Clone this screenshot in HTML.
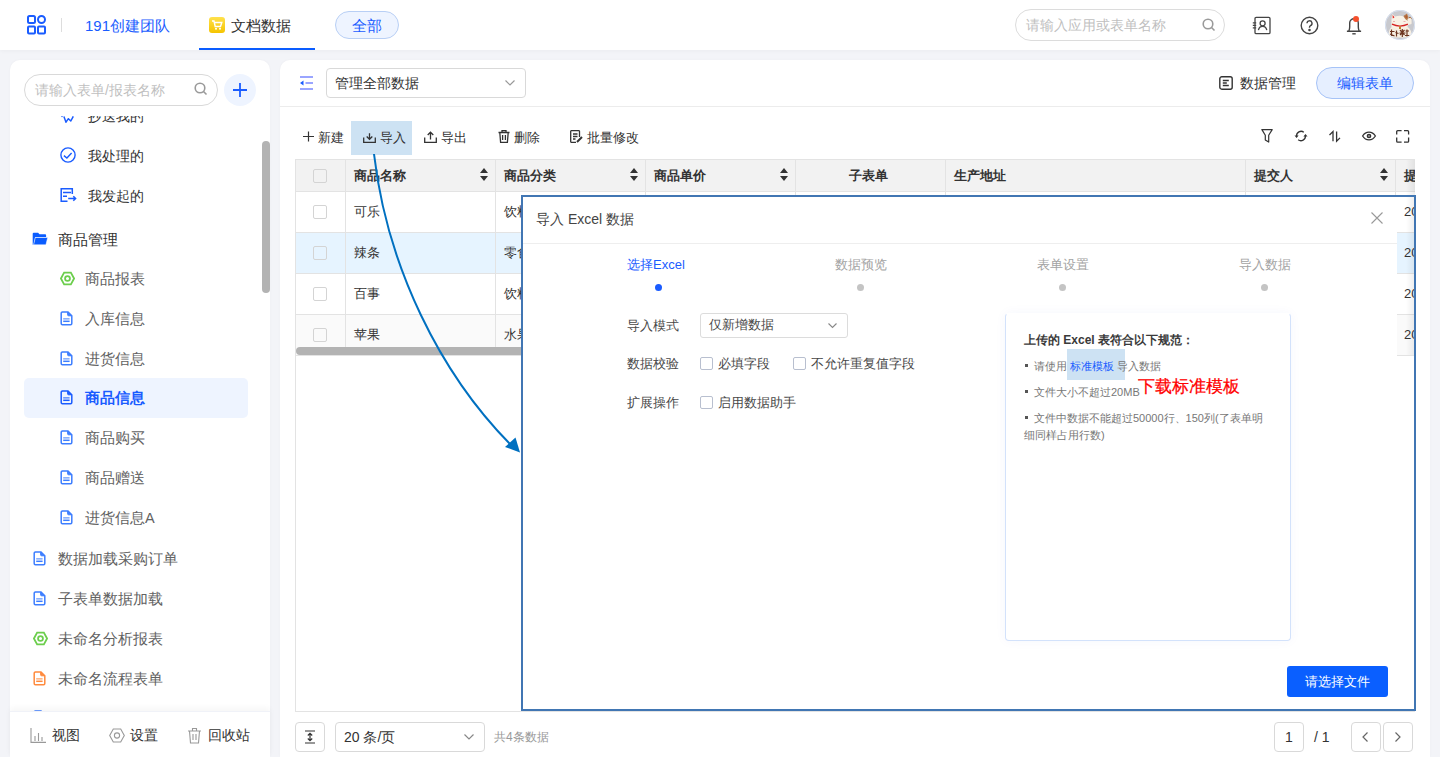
<!DOCTYPE html>
<html><head><meta charset="utf-8">
<style>
*{box-sizing:border-box;margin:0;padding:0}
html,body{width:1440px;height:757px;overflow:hidden}
body{background:#f3f4f8;font-family:"Liberation Sans",sans-serif;font-size:14px;color:#333;position:relative}
.a{position:absolute}
.t{position:absolute;white-space:nowrap;line-height:20px}
svg{position:absolute;overflow:visible}
#hdr{left:0;top:0;width:1440px;height:50px;background:#fff;box-shadow:0 1px 4px rgba(0,0,0,.04)}
#side{left:10px;top:60px;width:260px;height:697px;background:#fff;border-radius:10px 10px 0 0;box-shadow:0 0 3px rgba(0,0,0,.03)}
#main{left:280px;top:60px;width:1150px;height:697px;background:#fff;border-radius:10px 10px 0 0;box-shadow:0 0 3px rgba(0,0,0,.03)}
.it{color:#626262;font-size:14.5px}
.th{font-weight:bold;color:#333;font-size:13px}
.cb{position:absolute;width:14px;height:14px;border:1px solid #d4d4d4;border-radius:2px}
.vl{position:absolute;width:1px;background:#e3e3e3}
.hl{position:absolute;height:1px;background:#e3e3e3}
</style></head><body>

<!-- HEADER -->
<div id="hdr" class="a">
  <svg style="left:27px;top:15px" width="20" height="20" viewBox="0 0 20 20" fill="none" stroke="#1a5cff" stroke-width="2">
    <rect x="1" y="1" width="7" height="7" rx="1.5"/><circle cx="14.5" cy="4.5" r="3.5"/>
    <rect x="1" y="11.5" width="7" height="7" rx="1"/><rect x="11" y="11.5" width="7" height="7" rx="1"/>
  </svg>
  <div class="a" style="left:61px;top:18px;width:1px;height:14px;background:#ddd"></div>
  <div class="t" style="left:85px;top:16px;font-size:15px;color:#1a5cff">191创建团队</div>
  <div class="a" style="left:209px;top:17px;width:16px;height:16px;border-radius:3px;background:linear-gradient(#ffe14d,#f5c400)"></div>
  <svg style="left:211px;top:19px" width="12" height="12" viewBox="0 0 12 12"><path d="M1 2h2l1.2 5.5h5.3L10.8 3.5H4" fill="none" stroke="#fff" stroke-width="1.4"/><circle cx="5" cy="9.8" r="1" fill="#fff"/><circle cx="9" cy="9.8" r="1" fill="#fff"/></svg>
  <div class="t" style="left:231px;top:16px;font-size:15px;color:#333">文档数据</div>
  <div class="a" style="left:199px;top:48px;width:116px;height:2px;background:#0a5cff"></div>
  <div class="a" style="left:335px;top:11px;width:64px;height:28px;border-radius:14px;background:#eef4ff;border:1px solid #b8cff5"></div>
  <div class="t" style="left:352px;top:16px;font-size:15px;color:#1a5cff">全部</div>

  <div class="a" style="left:1015px;top:9px;width:210px;height:32px;border-radius:16px;border:1px solid #dcdcdc"></div>
  <div class="t" style="left:1026px;top:15px;font-size:14px;color:#bfbfbf">请输入应用或表单名称</div>
  <svg style="left:1202px;top:18px" width="14" height="14" viewBox="0 0 14 14" fill="none" stroke="#9a9a9a" stroke-width="1.6"><circle cx="6" cy="6" r="4.8"/><path d="M9.5 9.5L12.5 12.5"/></svg>

  <svg style="left:1252px;top:16px" width="19" height="19" viewBox="0 0 19 19" fill="none" stroke="#444" stroke-width="1.3">
    <rect x="3" y="1.4" width="15" height="16.2" rx="1.2"/><circle cx="10.6" cy="7.3" r="2.5"/><path d="M6.4 14.2c.5-2.7 2-3.9 4.2-3.9s3.7 1.2 4.2 3.9"/><path d="M.8 6.9h3.4M.8 9.4h3.4M.8 11.9h3.4"/>
  </svg>
  <svg style="left:1300px;top:16px" width="19" height="19" viewBox="0 0 19 19" fill="none" stroke="#444" stroke-width="1.4">
    <circle cx="9.5" cy="9.5" r="8.3"/><path d="M7 7.3a2.5 2.5 0 1 1 3.5 2.3c-.7.4-1 .8-1 1.6v.6"/><circle cx="9.5" cy="14" r=".6" fill="#444"/>
  </svg>
  <svg style="left:1346px;top:15px" width="16" height="20" viewBox="0 0 16 20" fill="none" stroke="#444" stroke-width="1.4">
    <path d="M.9 16.3h14.2M2.7 16.3c.7-1.2 1-2.6 1-4.2V8.1a4.3 4.3 0 0 1 8.6 0v4c0 1.6.3 3 1 4.2"/><path d="M6.3 18.8h3.4"/>
  </svg>
  <div class="a" style="left:1353px;top:16px;width:6px;height:6px;border-radius:50%;background:#f5502d"></div>
  <svg style="left:1385px;top:10px" width="30" height="30" viewBox="0 0 30 30">
    <defs><clipPath id="avc"><circle cx="15" cy="15" r="15"/></clipPath></defs>
    <circle cx="15" cy="15" r="15" fill="#c8c9ce"/>
    <g clip-path="url(#avc)">
      <path d="M3.5 27.5 Q3 20 7 16.5 L22 16.5 Q27 19 26.5 27.5z" fill="#f7efe2"/>
      <path d="M6.5 17 Q6 8 7.5 4 L10 6.5 Q15 5 19 6.5 L22 3.5 Q24 9 22.5 17 Q15 20 6.5 17z" fill="#f9f2e6"/>
      <path d="M7.6 5 L9.5 7.2 L7.8 8.5z" fill="#e52420"/>
      <path d="M21.8 4.5 L20 7 L22 8.5z" fill="#e52420"/>
      <path d="M18.5 6 L22 3.5 Q24 7 23.5 11 Q20 10 18.5 6z" fill="#a9642f" opacity=".85"/>
      <path d="M7 14.2 Q15 18 23 14.2" fill="none" stroke="#d62424" stroke-width="1.4"/>
      <rect x="14" y="16.5" width="2" height="2.5" fill="#b8832e"/>
      <path d="M22.5 9 L25.5 7.5 Q27 9 26.5 14 L23 15z" fill="#f7efe2"/>
      <path d="M24 7.6 Q25.5 7 26.5 8.5" stroke="#a9642f" stroke-width="1" fill="none"/>
      <path d="M5 21.5h4.5M6.5 19.5v6.5M5 24l4.5 2M10.5 22.5l3 1M11.5 20.5v6M15 20l4.5 5M19.5 20l-4.5 5M17.3 19v8M14.5 23h6M20.5 21h3.5M22 19.5v7M20 25.5h4.5" stroke="#6b3520" stroke-width="1.2" fill="none"/>
      <path d="M8 11.5h2M18.5 11.5h2" stroke="#e6a0a0" stroke-width=".8"/>
    </g>
    <circle cx="15" cy="15" r="14.6" fill="none" stroke="#dbe7fa" stroke-width=".8"/>
  </svg></div>

<!-- SIDEBAR -->
<div id="side" class="a"></div>
<svg width="0" height="0" style="position:absolute">
 <defs>
  <symbol id="doc" viewBox="0 0 13 15"><path d="M1.2 2.2a1.2 1.2 0 0 1 1.2-1.2h5.6l3.8 3.8v7.8a1.2 1.2 0 0 1-1.2 1.2H2.4a1.2 1.2 0 0 1-1.2-1.2z" fill="none" stroke="currentColor" stroke-width="1.5"/><path d="M7.6 1.2v2.6a1 1 0 0 0 1 1h2.6z" fill="currentColor" stroke="currentColor" stroke-width="1"/><path d="M3.2 7.9h6.4" stroke="currentColor" stroke-width="1"/><path d="M3.2 10.3h6.4" stroke="currentColor" stroke-width="1.5"/></symbol>
  <symbol id="hex" viewBox="0 0 16 15"><path d="M4.4 1.3h7.2L15 7.5l-3.4 6.2H4.4L1 7.5z" fill="none" stroke="currentColor" stroke-width="1.9"/><circle cx="8" cy="7.5" r="2.6" fill="none" stroke="currentColor" stroke-width="1.9"/></symbol>
 </defs>
</svg>
<div class="a" style="left:24px;top:74px;width:194px;height:32px;border-radius:16px;border:1px solid #d9d9d9;background:#fff"></div>
<div class="t" style="left:35px;top:80px;color:#bfbfbf">请输入表单/报表名称</div>
<svg style="left:194px;top:82px" width="14" height="14" viewBox="0 0 14 14" fill="none" stroke="#9a9a9a" stroke-width="1.6"><circle cx="6" cy="6" r="4.8"/><path d="M9.5 9.5L12.5 12.5"/></svg>
<div class="a" style="left:224px;top:74px;width:32px;height:32px;border-radius:50%;background:#eef4ff"></div>
<svg style="left:233px;top:83px" width="14" height="14" viewBox="0 0 14 14" stroke="#1a5cff" stroke-width="1.8"><path d="M7 0v14M0 7h14"/></svg>

<div id="slist" class="a" style="left:10px;top:116px;width:260px;height:595px;overflow:hidden">
  <!-- coords relative: page y - 116, page x - 10 -->
  <svg style="left:50px;top:-8px" width="16" height="16" viewBox="0 0 16 16" fill="none" stroke="#1a5cff" stroke-width="1.5" stroke-linejoin="round"><path d="M3.9 8.4L6 14.2L8.4 10.7L10.8 13L13.3 8.3"/><circle cx="2" cy="8.6" r=".7" fill="#1a5cff" stroke="none"/></svg>
  <div class="t" style="left:78px;top:-10px;color:#333">抄送我的</div>
  <svg style="left:50px;top:31px" width="16" height="16" viewBox="0 0 16 16" fill="none" stroke="#1a5cff" stroke-width="1.4"><circle cx="8" cy="8" r="7.1"/><path d="M3.9 8.6L6.9 11L11.6 6"/></svg>
  <div class="t" style="left:78px;top:30px;color:#333">我处理的</div>
  <svg style="left:50px;top:72px" width="17" height="16" viewBox="0 0 17 16" fill="none" stroke="#1a5cff" stroke-width="1.5"><path d="M12.3 6V.8H1.2V13.2H7.5"/><path d="M3 4.4H11M3 8.3H7"/><path d="M8.2 10.5H15.6M13.3 8.2L15.6 10.5L13.3 12.8"/></svg>
  <div class="t" style="left:78px;top:70px;color:#333">我发起的</div>
  <svg style="left:22px;top:116px" width="16" height="13" viewBox="0 0 16 13"><path d="M.7 1.7a1 1 0 0 1 1-1h4.4l1.4 1.6h5.6a1 1 0 0 1 1 1v1.6H3.2L1.6 12.8H.7z" fill="#0a5cff"/><path d="M3.3 5.5h12.4l-1.8 7.3H1.6z" fill="#0a5cff" stroke="#fff" stroke-width=".5"/></svg>
  <div class="t" style="left:48px;top:114px;color:#333;font-size:14.5px">商品管理</div>

  <svg style="left:50px;top:155px;color:#6cce4d" width="15" height="15"><use href="#hex"/></svg>
  <div class="t it" style="left:75px;top:153px">商品报表</div>
  <svg style="left:50px;top:195px;color:#3d7eff" width="13" height="15"><use href="#doc"/></svg>
  <div class="t it" style="left:75px;top:193px">入库信息</div>
  <svg style="left:50px;top:235px;color:#3d7eff" width="13" height="15"><use href="#doc"/></svg>
  <div class="t it" style="left:75px;top:233px">进货信息</div>
  <div class="a" style="left:14px;top:262px;width:224px;height:40px;border-radius:5px;background:#eef4ff"></div>
  <svg style="left:50px;top:274px;color:#1a5cff" width="13" height="15"><use href="#doc"/></svg>
  <div class="t" style="left:75px;top:272px;color:#1a5cff;font-weight:bold;font-size:14.5px">商品信息</div>
  <svg style="left:50px;top:314px;color:#3d7eff" width="13" height="15"><use href="#doc"/></svg>
  <div class="t it" style="left:75px;top:312px">商品购买</div>
  <svg style="left:50px;top:354px;color:#3d7eff" width="13" height="15"><use href="#doc"/></svg>
  <div class="t it" style="left:75px;top:352px">商品赠送</div>
  <svg style="left:50px;top:394px;color:#3d7eff" width="13" height="15"><use href="#doc"/></svg>
  <div class="t it" style="left:75px;top:392px">进货信息A</div>
  <svg style="left:23px;top:435px;color:#3d7eff" width="13" height="15"><use href="#doc"/></svg>
  <div class="t it" style="left:48px;top:433px">数据加载采购订单</div>
  <svg style="left:23px;top:475px;color:#3d7eff" width="13" height="15"><use href="#doc"/></svg>
  <div class="t it" style="left:48px;top:473px">子表单数据加载</div>
  <svg style="left:23px;top:515px;color:#6cce4d" width="15" height="15"><use href="#hex"/></svg>
  <div class="t it" style="left:48px;top:513px">未命名分析报表</div>
  <svg style="left:23px;top:555px;color:#ff8a3d" width="13" height="15"><use href="#doc"/></svg>
  <div class="t it" style="left:48px;top:553px">未命名流程表单</div>
  <svg style="left:23px;top:594px;color:#3d7eff" width="13" height="15"><use href="#doc"/></svg>
  <div class="a" style="left:252px;top:25px;width:8px;height:152px;border-radius:4px;background:#b3b3b3"></div>
</div>
<div class="a" style="left:10px;top:711px;width:260px;height:46px;background:#fff;box-shadow:0 -3px 6px rgba(0,0,0,.04);border-top:1px solid #f0f2f8"></div>
<svg style="left:30px;top:728px" width="16" height="15" viewBox="0 0 16 15" fill="none" stroke="#999" stroke-width="1.1"><path d="M1 0v14.4h15M5 8v5M8.5 5v8M12 9v4"/></svg>
<div class="t" style="left:52px;top:725px;color:#333">视图</div>
<svg style="left:109px;top:728px" width="16" height="15" viewBox="0 0 16 15" fill="none" stroke="#999" stroke-width="1.1"><path d="M4.3 1h7.4l3.6 6.5-3.6 6.5H4.3L.7 7.5z"/><circle cx="8" cy="7.5" r="2.6"/></svg>
<div class="t" style="left:130px;top:725px;color:#333">设置</div>
<svg style="left:187px;top:727px" width="15" height="17" viewBox="0 0 15 17" fill="none" stroke="#999" stroke-width="1.1"><path d="M1 4h13M5.5 4V1.5h4V4M2.5 4l1 12h8l1-12M6 7v6M9 7v6"/></svg>
<div class="t" style="left:208px;top:725px;color:#333">回收站</div>


<!-- MAIN -->
<div id="main" class="a"></div>
<!-- main top bar -->
<svg style="left:300px;top:76px" width="14" height="14" viewBox="0 0 14 14"><path d="M0 1h13M5.5 7h7.5M0 13h13" stroke="#7a88ff" stroke-width="1.7"/><path d="M0 7l3.5-2.6v5.2z" fill="#1a5cff"/></svg>
<div class="a" style="left:326px;top:68px;width:200px;height:30px;border-radius:4px;border:1px solid #d9d9d9;background:#fff"></div>
<div class="t" style="left:335px;top:73px;color:#333">管理全部数据</div>
<svg style="left:505px;top:80px" width="10" height="6" viewBox="0 0 10 6" fill="none" stroke="#999" stroke-width="1.2"><path d="M.5.5L5 5 9.5.5"/></svg>
<svg style="left:1219px;top:76px" width="14" height="14" viewBox="0 0 14 14" fill="none" stroke="#333" stroke-width="1.4"><rect x=".8" y=".8" width="12.4" height="12.4" rx="2"/><path d="M3.8 4.5h6M3.8 7h4M3.8 9.5h6"/></svg>
<div class="t" style="left:1240px;top:73px;color:#333">数据管理</div>
<div class="a" style="left:1316px;top:67px;width:98px;height:32px;border-radius:16px;background:#e6efff;border:1px solid #a6c3f7"></div>
<div class="t" style="left:1337px;top:73px;color:#1a5cff">编辑表单</div>
<div class="a" style="left:280px;top:106px;width:1150px;height:1px;background:#ececec"></div>

<!-- toolbar -->
<div class="a" style="left:351px;top:121px;width:61px;height:34px;background:#cde2f3"></div>
<svg style="left:303px;top:131px" width="11" height="11" viewBox="0 0 11 11" stroke="#333" stroke-width="1.2"><path d="M5.5 .5v10M0 5.5h11"/></svg>
<div class="t" style="left:318px;top:128px;font-size:13px;color:#333">新建</div>
<svg style="left:363px;top:130px" width="13" height="13" viewBox="0 0 13 13" fill="none" stroke="#333" stroke-width="1.3"><path d="M.7 7.5v4.8h11.6V7.5M6.5 3.2v6M3.7 6.5l2.8 2.8 2.8-2.8"/></svg>
<div class="t" style="left:380px;top:128px;font-size:13px;color:#333">导入</div>
<svg style="left:424px;top:130px" width="13" height="13" viewBox="0 0 13 13" fill="none" stroke="#333" stroke-width="1.3"><path d="M.7 7.5v4.8h11.6V7.5M6.5 9.5V2.2M3.7 5l2.8-2.8 2.8 2.8"/></svg>
<div class="t" style="left:441px;top:128px;font-size:13px;color:#333">导出</div>
<svg style="left:498px;top:130px" width="12" height="13" viewBox="0 0 12 13" fill="none" stroke="#333" stroke-width="1.3"><path d="M.5 2.5h11M4 2.5V.7h4v1.8M1.8 2.5l.8 9.8h6.8l.8-9.8M4.6 5v5M7.4 5v5"/></svg>
<div class="t" style="left:514px;top:128px;font-size:13px;color:#333">删除</div>
<svg style="left:570px;top:130px" width="13" height="13" viewBox="0 0 13 13" fill="none" stroke="#333" stroke-width="1.3"><path d="M9.5 7V1.2a.5.5 0 0 0-.5-.5H1.2a.5.5 0 0 0-.5.5v10.6a.5.5 0 0 0 .5.5H6"/><path d="M3 4h4.5M3 6.5h4.5M3 9h2.5"/><path d="M7 12l5-5" stroke-width="2"/></svg>
<div class="t" style="left:587px;top:128px;font-size:13px;color:#333">批量修改</div>

<svg style="left:1261px;top:129px" width="13" height="14" viewBox="0 0 13 14" fill="none" stroke="#333" stroke-width="1.2" stroke-linejoin="round"><path d="M.9 .6H11.2L7.7 6.2V13.1L4.3 11V6.2Z"/></svg>
<svg style="left:1293px;top:129px" width="16" height="14" viewBox="0 0 16 14" fill="none" stroke="#333" stroke-width="1.3"><path d="M3.6 7.2A4.5 4.5 0 0 1 10.8 3.2"/><path d="M12.4 6.8A4.5 4.5 0 0 1 5.2 10.8"/><path d="M1.5 6.4L5.6 6.4L3.6 8.9z" fill="#333" stroke="none"/><path d="M10.4 7.6L14.5 7.6L12.5 5.1z" fill="#333" stroke="none"/></svg>
<svg style="left:1328px;top:130px" width="14" height="13" viewBox="0 0 14 13" fill="none" stroke="#333" stroke-width="1.3"><path d="M5 11.3V1.6L1.5 5M8.6 1.6V11.3L12 7.9"/></svg>
<svg style="left:1361px;top:130px" width="16" height="12" viewBox="0 0 16 12" fill="none" stroke="#333" stroke-width="1.3"><path d="M1.6 6C3.2 3.4 5.4 2.1 8 2.1S12.8 3.4 14.4 6C12.8 8.6 10.6 9.9 8 9.9S3.2 8.6 1.6 6z"/><circle cx="8" cy="6" r="1.5" stroke-width="1.7"/></svg>
<svg style="left:1396px;top:130px" width="14" height="13" viewBox="0 0 14 13" fill="none" stroke="#333" stroke-width="1.3"><path d="M.7 4.5V1.7a1 1 0 0 1 1-1H5.6M8 .7h3.6a1 1 0 0 1 1 1v2.8M12.6 7.6v3.6a1 1 0 0 1-1 1H8M5.6 12.2H1.7a1 1 0 0 1-1-1V7.6"/></svg>

<!-- table -->
<div id="tbl" class="a" style="left:295px;top:159px;width:1120px;height:553px;border:1px solid #e3e3e3;border-right:none;overflow:hidden;background:#fff">
 <div class="a" style="left:0;top:0;width:1120px;height:31px;background:#f2f2f2"></div>
 <div class="a" style="left:0;top:73px;width:1120px;height:40px;background:#e6f4ff"></div>
 <div class="a" style="left:0;top:155px;width:1120px;height:40px;background:#fafafa"></div>
 <div class="hl" style="left:0;top:31px;width:1120px"></div>
 <div class="hl" style="left:0;top:72px;width:1120px"></div>
 <div class="hl" style="left:0;top:113px;width:1120px"></div>
 <div class="hl" style="left:0;top:154px;width:1120px"></div>
 <div class="hl" style="left:0;top:195px;width:1120px"></div>
 <div class="vl" style="left:49px;top:0;height:195px"></div>
 <div class="vl" style="left:199px;top:0;height:195px"></div>
 <div class="vl" style="left:349px;top:0;height:195px"></div>
 <div class="vl" style="left:499px;top:0;height:195px"></div>
 <div class="vl" style="left:649px;top:0;height:195px"></div>
 <div class="vl" style="left:949px;top:0;height:195px"></div>
 <div class="vl" style="left:1099px;top:0;height:195px"></div>
 <div class="cb" style="left:17px;top:9px"></div>
 <div class="cb" style="left:17px;top:45px"></div>
 <div class="cb" style="left:17px;top:86px"></div>
 <div class="cb" style="left:17px;top:127px"></div>
 <div class="cb" style="left:17px;top:168px"></div>
 <div class="t th" style="left:58px;top:6px">商品名称</div>
 <div class="t th" style="left:208px;top:6px">商品分类</div>
 <div class="t th" style="left:358px;top:6px">商品单价</div>
 <div class="t th" style="left:553px;top:6px">子表单</div>
 <div class="t th" style="left:658px;top:6px">生产地址</div>
 <div class="t th" style="left:958px;top:6px">提交人</div>
 <div class="t th" style="left:1108px;top:6px">提交时间</div>
 <svg style="left:184px;top:8px" width="8" height="13" viewBox="0 0 8 13" fill="#333"><path d="M4 0L8 5H0zM0 8H8L4 13z"/></svg>
 <svg style="left:334px;top:8px" width="8" height="13" viewBox="0 0 8 13" fill="#333"><path d="M4 0L8 5H0zM0 8H8L4 13z"/></svg>
 <svg style="left:484px;top:8px" width="8" height="13" viewBox="0 0 8 13" fill="#333"><path d="M4 0L8 5H0zM0 8H8L4 13z"/></svg>
 <svg style="left:1084px;top:8px" width="8" height="13" viewBox="0 0 8 13" fill="#333"><path d="M4 0L8 5H0zM0 8H8L4 13z"/></svg>
 <div class="t" style="font-size:13px;left:58px;top:42px">可乐</div>
 <div class="t" style="font-size:13px;left:208px;top:42px">饮料</div>
 <div class="t" style="font-size:13px;left:58px;top:83px">辣条</div>
 <div class="t" style="font-size:13px;left:208px;top:83px">零食</div>
 <div class="t" style="font-size:13px;left:58px;top:124px">百事</div>
 <div class="t" style="font-size:13px;left:208px;top:124px">饮料</div>
 <div class="t" style="font-size:13px;left:58px;top:165px">苹果</div>
 <div class="t" style="font-size:13px;left:208px;top:165px">水果</div>
 <div class="t" style="font-size:13px;left:1108px;top:42px">2023</div>
 <div class="t" style="font-size:13px;left:1108px;top:83px">2023</div>
 <div class="t" style="font-size:13px;left:1108px;top:124px">2023</div>
 <div class="t" style="font-size:13px;left:1108px;top:165px">2023</div>
 <div class="a" style="left:1110px;top:0;width:9px;height:195px;background:linear-gradient(90deg,rgba(0,0,0,0),rgba(0,0,0,.07))"></div>
 <div class="a" style="left:0;top:187px;width:1000px;height:8px;border-radius:4px;background:#b3b3b3"></div>
</div>

<!-- pagination -->
<div class="a" style="left:295px;top:722px;width:30px;height:30px;border:1px solid #d9d9d9;border-radius:4px"></div>
<svg style="left:303px;top:730px" width="14" height="14" viewBox="0 0 14 14" fill="none" stroke="#333" stroke-width="1.2"><path d="M2 1h10M2 13h10M7 3.5v7M4.8 5.5L7 3.3l2.2 2.2M4.8 8.5L7 10.7l2.2-2.2"/></svg>
<div class="a" style="left:335px;top:722px;width:150px;height:30px;border:1px solid #d9d9d9;border-radius:4px"></div>
<div class="t" style="left:344px;top:727px;color:#333">20 条/页</div>
<svg style="left:464px;top:734px" width="10" height="6" viewBox="0 0 10 6" fill="none" stroke="#888" stroke-width="1.2"><path d="M.5.5L5 5 9.5.5"/></svg>
<div class="t" style="left:494px;top:727px;font-size:12px;color:#999">共4条数据</div>
<div class="a" style="left:1274px;top:722px;width:30px;height:30px;border:1px solid #d9d9d9;border-radius:4px"></div>
<div class="t" style="left:1285px;top:727px;color:#333">1</div>
<div class="t" style="left:1314px;top:727px;color:#333">/ 1</div>
<div class="a" style="left:1351px;top:722px;width:30px;height:30px;border:1px solid #d9d9d9;border-radius:4px"></div>
<div class="a" style="left:1383px;top:722px;width:30px;height:30px;border:1px solid #d9d9d9;border-radius:4px"></div>
<svg style="left:1362px;top:732px" width="6" height="10" viewBox="0 0 6 10" fill="none" stroke="#666" stroke-width="1.2"><path d="M5.5.5L1 5l4.5 4.5"/></svg>
<svg style="left:1395px;top:732px" width="6" height="10" viewBox="0 0 6 10" fill="none" stroke="#666" stroke-width="1.2"><path d="M.5.5L5 5 .5 9.5"/></svg>

<!-- MODAL -->
<div class="a" style="left:522px;top:196px;width:875px;height:513px;background:#fff"></div>
<div class="t" style="left:536px;top:209px;color:#444">导入 Excel 数据</div>
<svg style="left:1371px;top:212px" width="12" height="12" viewBox="0 0 12 12" stroke="#999" stroke-width="1.1"><path d="M.5.5l11 11M11.5.5l-11 11"/></svg>
<div class="a" style="left:522px;top:243px;width:875px;height:1px;background:#eee"></div>
<div class="t" style="left:627px;top:255px;font-size:13px;color:#1a5cff">选择Excel</div>
<div class="a" style="left:655px;top:284px;width:7px;height:7px;border-radius:50%;background:#1a5cff"></div>
<div class="t" style="left:835px;top:255px;font-size:13px;color:#a3a3a3">数据预览</div>
<div class="a" style="left:857px;top:284px;width:7px;height:7px;border-radius:50%;background:#c4c4c4"></div>
<div class="t" style="left:1037px;top:255px;font-size:13px;color:#a3a3a3">表单设置</div>
<div class="a" style="left:1059px;top:284px;width:7px;height:7px;border-radius:50%;background:#c4c4c4"></div>
<div class="t" style="left:1239px;top:255px;font-size:13px;color:#a3a3a3">导入数据</div>
<div class="a" style="left:1261px;top:284px;width:7px;height:7px;border-radius:50%;background:#c4c4c4"></div>

<div class="t" style="left:627px;top:316px;font-size:13px;color:#484848">导入模式</div>
<div class="a" style="left:700px;top:313px;width:148px;height:25px;border:1px solid #dcdcdc;border-radius:3px"></div>
<div class="t" style="left:709px;top:315px;font-size:13px;color:#484848">仅新增数据</div>
<svg style="left:828px;top:323px" width="9" height="5" viewBox="0 0 9 5" fill="none" stroke="#888" stroke-width="1.1"><path d="M.5.5L4.5 4.5 8.5.5"/></svg>
<div class="t" style="left:627px;top:354px;font-size:13px;color:#484848">数据校验</div>
<div class="cb" style="left:700px;top:357px;width:13px;height:13px;border-color:#b8bfcf"></div>
<div class="t" style="left:718px;top:354px;font-size:13px;color:#484848">必填字段</div>
<div class="cb" style="left:793px;top:357px;width:13px;height:13px;border-color:#b8bfcf"></div>
<div class="t" style="left:811px;top:354px;font-size:13px;color:#484848">不允许重复值字段</div>
<div class="t" style="left:627px;top:393px;font-size:13px;color:#484848">扩展操作</div>
<div class="cb" style="left:700px;top:396px;width:13px;height:13px;border-color:#b8bfcf"></div>
<div class="t" style="left:718px;top:393px;font-size:13px;color:#484848">启用数据助手</div>

<div class="a" style="left:1005px;top:313px;width:286px;height:328px;border:1px solid #d3e2fb;border-top-color:#fff;border-radius:4px;box-shadow:0 0 12px rgba(30,80,200,.045)"></div>
<div class="t" style="left:1024px;top:330px;font-size:12px;font-weight:bold;color:#3a3a3a">上传的 Excel 表符合以下规范：</div>
<div class="a" style="left:1067px;top:349px;width:58px;height:31px;background:#cde2f3"></div>
<div class="a" style="left:1025px;top:364px;width:3px;height:3px;background:#555"></div>
<div class="t" style="left:1034px;top:356px;font-size:11px;color:#777">请使用 <span style="color:#1a5cff">标准模板</span> 导入数据</div>
<div class="a" style="left:1025px;top:390px;width:3px;height:3px;background:#555"></div>
<div class="t" style="left:1034px;top:382px;font-size:11px;color:#777">文件大小不超过20MB</div>
<div class="t" style="left:1138px;top:377px;font-size:17px;color:#f00;-webkit-text-stroke:.25px #f00">下载标准模板</div>
<div class="a" style="left:1025px;top:416px;width:3px;height:3px;background:#555"></div>
<div class="t" style="left:1034px;top:408px;font-size:11px;color:#777">文件中数据不能超过50000行、150列(了表单明</div>
<div class="t" style="left:1024px;top:425px;font-size:11px;color:#777">细同样占用行数)</div>

<div class="a" style="left:1287px;top:666px;width:101px;height:31px;border-radius:3px;background:#0a5fff"></div>
<div class="t" style="left:1305px;top:672px;font-size:13px;color:#fff">请选择文件</div>

<!-- annotation -->
<div class="a" style="left:521px;top:195px;width:895px;height:516px;border:2px solid #4176b3"></div>
<svg style="left:0;top:0" width="1440" height="757" viewBox="0 0 1440 757">
  <path d="M374 154 C387 266 440 374 512 446" fill="none" stroke="#0070c0" stroke-width="2"/>
  <path d="M520 452.5 L505 447 L515.5 437.5 z" fill="#0070c0"/>
</svg>


</body></html>
